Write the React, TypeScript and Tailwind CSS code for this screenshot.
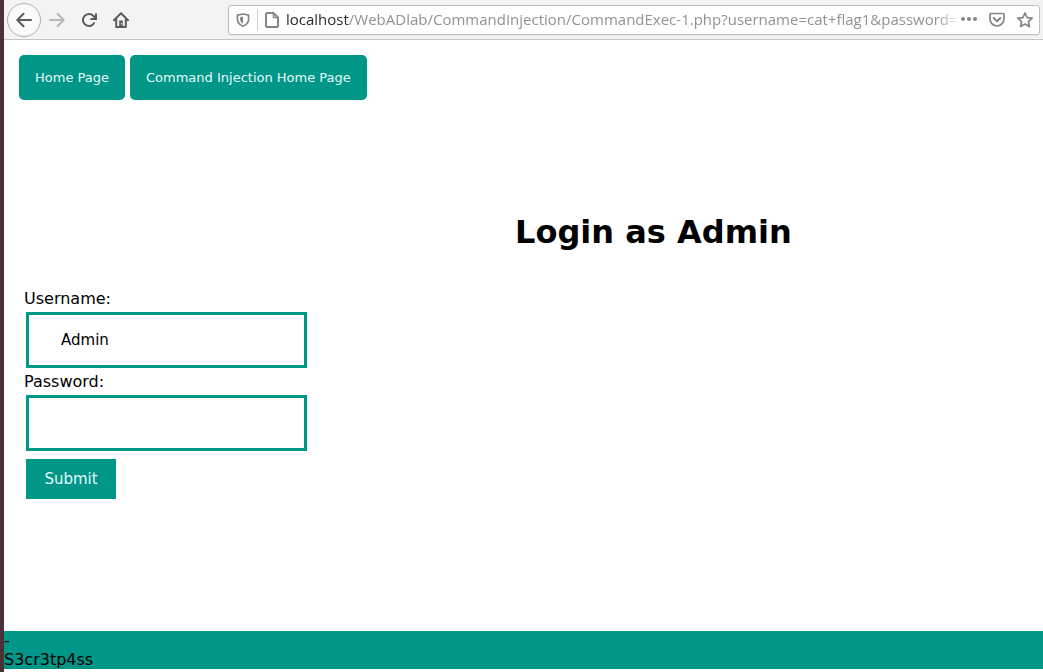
import React from "react";

const iconButton = "flex size-8 items-center justify-center";

function Toolbar() {
  return (
    <header className="flex h-10 items-center border-b border-[#c4c4c4] bg-[#f4f3f2] px-[3px] text-[#5c5b59]">
      <button
        type="button"
        aria-label="Back"
        className="flex size-[34px] shrink-0 items-center justify-center rounded-full border border-[#b0afad] bg-[#fafafa]"
      >
        <svg width="16" height="16" viewBox="0 0 16 16" fill="none" stroke="currentColor" strokeWidth="2" strokeLinecap="round" strokeLinejoin="round">
          <path d="M15 8H1.5M7.5 1.8L1.3 8l6.2 6.2" />
        </svg>
      </button>
      <button type="button" aria-label="Forward" className={iconButton + " text-[#bab9b8]"}>
        <svg width="16" height="16" viewBox="0 0 16 16" fill="none" stroke="currentColor" strokeWidth="2" strokeLinecap="round" strokeLinejoin="round">
          <path d="M1 8h13.5M8.5 1.8L14.7 8l-6.2 6.2" />
        </svg>
      </button>
      <button type="button" aria-label="Reload" className={iconButton}>
        <svg width="16" height="16" viewBox="0 0 16 16" fill="none" stroke="currentColor" strokeWidth="2" strokeLinecap="round" strokeLinejoin="round">
          <path d="M13 11.200A6 6 0 1 1 12.200 3.800L14 5.600" />
          <path d="M15 1.500V7H9.500" strokeLinecap="butt" strokeLinejoin="miter" />
        </svg>
      </button>
      <button type="button" aria-label="Home" className={iconButton}>
        <svg width="16" height="16" viewBox="0 0 16 16" fill="none" stroke="currentColor" strokeWidth="2" strokeLinecap="round" strokeLinejoin="round">
          <path d="M1 8.2L8 1.3l7 6.9M3.2 7.5V15h9.6V7.5" />
          <path d="M6.2 8.5h3.6V15H6.2z" fill="currentColor" stroke="none" />
          <path d="M8.500 11v1.500" stroke="#f4f3f2" strokeWidth="1" strokeLinecap="butt" />
        </svg>
      </button>
      <div className="ml-[91px] flex h-[30px] min-w-0 flex-1 items-center rounded-[3px] border border-[#c0bfbd] bg-white pr-[6px] pl-[7px] text-[#858585] shadow-xs">
        <svg width="14" height="14" viewBox="0 0 14 14" className="shrink-0" fill="none" stroke="currentColor" strokeWidth="1.7" strokeLinejoin="round">
          <path d="M7 1L12.6 2.2V6c0 3.500-2 5.800-5.600 7.200C3.400 11.800 1.400 9.500 1.400 6V2.200z" />
          <path d="M7 3.600v6.900C5 9.500 4.100 8 4.100 6V4.200z" fill="currentColor" stroke="none" />
        </svg>
        <span className="ml-[7px] h-[22px] w-px shrink-0 bg-[#cfcfcf]" />
        <svg width="14" height="16" viewBox="0 0 14 16" className="ml-[7px] shrink-0" fill="none" stroke="currentColor" strokeWidth="2" strokeLinejoin="round">
          <path d="M1 2.500Q1 1 2.500 1H8.500L13 5.500V13.500Q13 15 11.500 15H2.500Q1 15 1 13.500z" />
          <path d="M8.500 1v4.500H13" strokeWidth="1.500" />
        </svg>
        <div className="ml-[7px] min-w-0 flex-1 overflow-hidden pb-[2px] whitespace-nowrap font-['Open_Sans',sans-serif] text-[15px] leading-5 text-[#929292] [mask-image:linear-gradient(to_left,transparent,black_24px)]">
          <span className="text-[#2b2b2b]">localhost</span>
          /WebADlab/CommandInjection/CommandExec-1.php?username=cat+flag1&amp;password=
        </div>
        <div className="flex shrink-0 items-center gap-3">
          <button type="button" aria-label="Page actions">
            <svg width="16" height="16" viewBox="0 0 16 16" fill="currentColor">
              <circle cx="2" cy="7" r="2" />
              <circle cx="8" cy="7" r="2" />
              <circle cx="14" cy="7" r="2" />
            </svg>
          </button>
          <button type="button" aria-label="Save to Pocket">
            <svg width="16" height="16" viewBox="0 0 16 16" fill="none" stroke="currentColor" strokeWidth="2" strokeLinecap="round" strokeLinejoin="round">
              <path d="M2 1.500h12q1 0 1 1V7A7 7 0 0 1 1 7V2.500q0-1 1-1z" strokeWidth="1.700" />
              <path d="M4.700 6L8 9.200 11.300 6" />
            </svg>
          </button>
          <button type="button" aria-label="Bookmark this page">
            <svg width="16" height="16" viewBox="0 0 16 16" fill="none" stroke="currentColor" strokeWidth="1.700" strokeLinejoin="round">
              <path d="M8 1l2.100 4.600 5 .6-3.700 3.400 1 5L8 12.100l-4.400 2.500 1-5L.9 6.200l5-.6z" />
            </svg>
          </button>
        </div>
      </div>
    </header>
  );
}

const navLink = "rounded-[5px] bg-[#009688] px-4 py-3 text-[13px] leading-[21px] text-[#e6fbf8]";
const field = "mx-[2px] my-1 block h-14 w-[281px] border-3 border-[#009688] bg-white px-8 text-[15px] text-black outline-none";

export default function App() {
  return (
    <div className="flex min-h-screen bg-white font-['DejaVu_Sans',sans-serif] text-black">
      <div className="w-1 shrink-0 bg-[#4a3238]" />
      <div className="flex min-w-0 flex-1 flex-col">
        <Toolbar />
        <main className="flex-1">
          <nav className="flex gap-[5px] px-[15px] pt-[15px]">
            <a href="#home" className={navLink}>Home Page</a>
            <a href="#command-injection" className={navLink}>Command Injection Home Page</a>
          </nav>
          <h1 className="mt-28 pl-[25%] text-center text-[32px] leading-10 font-bold">Login as Admin</h1>
          <form className="mt-[37px] px-5 text-[16px] leading-[19px]" onSubmit={(e) => e.preventDefault()}>
            <label htmlFor="username" className="block">Username:</label>
            <input id="username" name="username" type="text" defaultValue="Admin" className={field} />
            <label htmlFor="password" className="block">Password:</label>
            <input id="password" name="password" type="password" className={field} />
            <button type="submit" className="mx-[2px] mt-1 h-10 w-[90px] bg-[#009688] text-[15px] text-[#e6fbf8]">
              Submit
            </button>
          </form>
        </main>
        <footer className="mb-[3px] bg-[#009688] text-[16px] leading-[19px]">
          <p>-</p>
          <p>S3cr3tp4ss</p>
        </footer>
      </div>
    </div>
  );
}
